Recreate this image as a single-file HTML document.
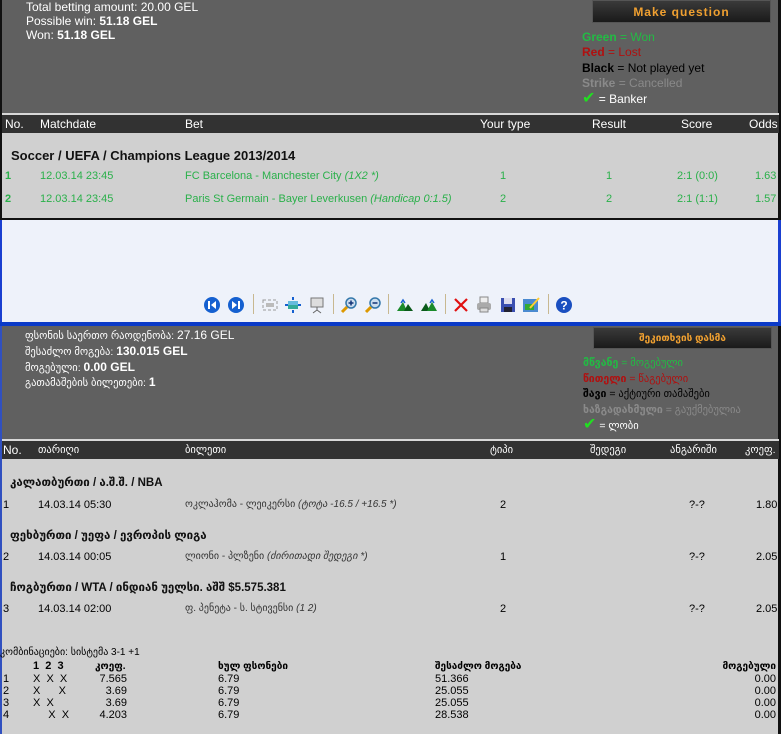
<!DOCTYPE html>
<html><head><meta charset="utf-8"><style>
*{margin:0;padding:0;box-sizing:border-box}
body{width:781px;height:734px;overflow:hidden;background:#eef2fa;font-family:"Liberation Sans","DejaVu Sans",sans-serif;font-size:12px;position:relative}
.a{position:absolute;white-space:nowrap}
.g{font-family:"Liberation Sans","DejaVu Sans",sans-serif;font-size:10.5px}
.w{color:#fff}.b{font-weight:bold}
.gr{color:#22bb44}.rd{color:#b01010}.bk{color:#000}.st{color:#8a8a8a}
.gt{color:#2ab04a}
.btn{position:absolute;background:linear-gradient(#3a3a3a,#1a1a1a);color:#f0a030;font-weight:bold;text-align:center;border:1px solid #555}
.hdr{position:absolute;left:2px;right:2px;background:#323232;border-top:2px solid #d8d8d8;color:#fff}
.ico{position:absolute;top:296px;width:18px;height:18px}
.sep{position:absolute;top:294px;width:1px;height:20px;background:#c8b890}
.r{text-align:right}
</style></head><body>
<!-- top panel -->
<div class="a" style="left:0;top:0;width:781px;height:220px;background:#606060;border-left:2px solid #111;border-right:3px solid #111;border-bottom:2px solid #111"></div>
<div class="a w" style="left:26px;top:0px">Total betting amount: 20.00 GEL</div>
<div class="a w" style="left:26px;top:14px">Possible win: <b>51.18 GEL</b></div>
<div class="a w" style="left:26px;top:28px">Won: <b>51.18 GEL</b></div>
<div class="btn" style="left:592px;top:0;width:179px;height:23px;line-height:22px;font-size:12px;letter-spacing:1px">Make question</div>
<div class="a" style="left:582px;top:30px"><b class="gr">Green</b> <span class="gr">= Won</span></div>
<div class="a" style="left:582px;top:45px"><b class="rd">Red</b> <span class="rd">= Lost</span></div>
<div class="a bk" style="left:582px;top:61px"><b>Black</b> = Not played yet</div>
<div class="a st" style="left:582px;top:76px"><b>Strike</b> = Cancelled</div>
<div class="a w" style="left:582px;top:92px"><span style="color:#22dd22;font-weight:bold;font-size:16px;line-height:12px">✔</span> = Banker</div>
<div class="hdr" style="top:113px;height:20px"></div>
<div class="a w" style="left:5px;top:117px">No.</div>
<div class="a w" style="left:40px;top:117px">Matchdate</div>
<div class="a w" style="left:185px;top:117px">Bet</div>
<div class="a w" style="left:480px;top:117px">Your type</div>
<div class="a w" style="left:592px;top:117px">Result</div>
<div class="a w" style="left:681px;top:117px">Score</div>
<div class="a w" style="left:749px;top:117px">Odds</div>
<div class="a" style="left:2px;top:133px;width:776px;height:85px;background:#d0d0d0"></div>
<div class="a b" style="left:11px;top:148px;font-size:13px;color:#111">Soccer / UEFA / Champions League 2013/2014</div>
<div class="a gt" style="left:5px;top:170px;font-size:11px"><b>1</b></div>
<div class="a gt" style="left:40px;top:170px;font-size:11px">12.03.14 23:45</div>
<div class="a gt" style="left:185px;top:170px;font-size:11px">FC Barcelona - Manchester City <i>(1X2 *)</i></div>
<div class="a gt" style="left:500px;top:170px;font-size:11px">1</div>
<div class="a gt" style="left:606px;top:170px;font-size:11px">1</div>
<div class="a gt" style="left:677px;top:170px;font-size:11px">2:1 (0:0)</div>
<div class="a gt" style="left:755px;top:170px;font-size:11px">1.63</div>
<div class="a gt" style="left:5px;top:193px;font-size:11px"><b>2</b></div>
<div class="a gt" style="left:40px;top:193px;font-size:11px">12.03.14 23:45</div>
<div class="a gt" style="left:185px;top:193px;font-size:11px">Paris St Germain - Bayer Leverkusen <i>(Handicap 0:1.5)</i></div>
<div class="a gt" style="left:500px;top:193px;font-size:11px">2</div>
<div class="a gt" style="left:606px;top:193px;font-size:11px">2</div>
<div class="a gt" style="left:677px;top:193px;font-size:11px">2:1 (1:1)</div>
<div class="a gt" style="left:755px;top:193px;font-size:11px">1.57</div>
<!-- white area border -->
<div class="a" style="left:0;top:220px;width:2px;height:106px;background:#1a3fd0"></div>
<div class="a" style="left:778px;top:220px;width:3px;height:106px;background:#1a3fd0"></div>
<!-- toolbar -->
<svg class="ico" style="left:203px" viewBox="0 0 18 18"><circle cx="9" cy="9" r="8" fill="#1560d0"/><rect x="5" y="5" width="2" height="8" fill="#fff"/><path d="M13 5L8 9l5 4z" fill="#fff"/></svg>
<svg class="ico" style="left:227px" viewBox="0 0 18 18"><circle cx="9" cy="9" r="8" fill="#1560d0"/><rect x="11" y="5" width="2" height="8" fill="#fff"/><path d="M5 5l5 4-5 4z" fill="#fff"/></svg>
<div class="sep" style="left:253px"></div>
<svg class="ico" style="left:261px" viewBox="0 0 18 18"><rect x="2" y="4" width="14" height="10" fill="none" stroke="#999" stroke-dasharray="3 2"/><rect x="5" y="7" width="8" height="4" fill="#bbb"/></svg>
<svg class="ico" style="left:284px" viewBox="0 0 18 18"><rect x="4" y="5" width="10" height="8" fill="#3a9"/><rect x="4" y="5" width="10" height="4" fill="#6bd"/><path d="M1 9h3M14 9h3M9 1v3M9 14v3" stroke="#1560d0" stroke-width="2"/></svg>
<svg class="ico" style="left:308px" viewBox="0 0 18 18"><rect x="3" y="2" width="12" height="9" fill="#ddd" stroke="#777"/><path d="M9 11v3M5 17l4-3 4 3" stroke="#666" fill="none"/></svg>
<div class="sep" style="left:333px"></div>
<svg class="ico" style="left:340px" viewBox="0 0 18 18"><circle cx="11" cy="7" r="5" fill="#cde" stroke="#37a" stroke-width="1.5"/><path d="M8.5 7h5M11 4.5v5" stroke="#137" stroke-width="1.5"/><path d="M7 11l-5 5" stroke="#d90" stroke-width="3"/></svg>
<svg class="ico" style="left:364px" viewBox="0 0 18 18"><circle cx="11" cy="7" r="5" fill="#cde" stroke="#37a" stroke-width="1.5"/><path d="M8.5 7h5" stroke="#137" stroke-width="1.5"/><path d="M7 11l-5 5" stroke="#d90" stroke-width="3"/></svg>
<div class="sep" style="left:388px"></div>
<svg class="ico" style="left:396px" viewBox="0 0 18 18"><path d="M1 15l6-9 4 9z" fill="#1a8a2a"/><path d="M8 15l4-7 5 7z" fill="#0a5a1a"/><path d="M5 7l2-3 2 3" stroke="#1560d0" fill="none" stroke-width="1.5"/></svg>
<svg class="ico" style="left:420px" viewBox="0 0 18 18"><path d="M1 15l5-8 4 8z" fill="#0a5a1a"/><path d="M7 15l5-9 5 9z" fill="#1a8a2a"/><path d="M10 7l2-3 2 3" stroke="#1560d0" fill="none" stroke-width="1.5"/></svg>
<div class="sep" style="left:445px"></div>
<svg class="ico" style="left:452px" viewBox="0 0 18 18"><path d="M3 3l12 12M15 3L3 15" stroke="#e01010" stroke-width="2.2"/></svg>
<svg class="ico" style="left:475px" viewBox="0 0 18 18"><rect x="5" y="1" width="8" height="6" fill="#eee" stroke="#888"/><rect x="2" y="7" width="14" height="7" rx="2" fill="#aaa"/><rect x="5" y="12" width="8" height="4" fill="#ddd" stroke="#888"/></svg>
<svg class="ico" style="left:499px" viewBox="0 0 18 18"><rect x="2" y="2" width="14" height="14" fill="#3a4fb0"/><rect x="5" y="2" width="8" height="6" fill="#dde"/><rect x="5" y="11" width="8" height="5" fill="#223"/></svg>
<svg class="ico" style="left:522px" viewBox="0 0 18 18"><rect x="1" y="3" width="15" height="13" fill="#4a8ad0"/><rect x="3" y="8" width="9" height="6" fill="#3a3"/><path d="M8 12L17 2" stroke="#fc3" stroke-width="2"/></svg>
<div class="sep" style="left:548px"></div>
<svg class="ico" style="left:555px" viewBox="0 0 18 18"><circle cx="9" cy="9" r="8" fill="#1a4fc0"/><text x="9" y="13.5" font-size="12" font-weight="bold" fill="#fff" text-anchor="middle" font-family="Liberation Sans">?</text></svg>
<div class="a" style="left:0;top:322px;width:781px;height:4px;background:#0a3ac8"></div>
<!-- second panel -->
<div class="a" style="left:0;top:326px;width:781px;height:408px;background:#606060;border-left:2px solid #3050c0;border-right:3px solid #111"></div>
<div class="a w g" style="left:25px;top:328px">ფსონის საერთო რაოდენობა: <span style="font-family:'Liberation Sans';font-size:12px">27.16 GEL</span></div>
<div class="a w g" style="left:25px;top:344px">შესაძლო მოგება: <b style="font-family:'Liberation Sans';font-size:12px">130.015 GEL</b></div>
<div class="a w g" style="left:25px;top:360px">მოგებული: <b style="font-family:'Liberation Sans';font-size:12px">0.00 GEL</b></div>
<div class="a w g" style="left:25px;top:375px">გათამაშების ბილეთები: <b style="font-family:'Liberation Sans';font-size:12px">1</b></div>
<div class="btn g" style="left:593px;top:327px;width:179px;height:22px;line-height:21px;font-size:10px">შეკითხვის დასმა</div>
<div class="a g" style="left:583px;top:357px"><b class="gr">მწვანე</b> <span class="gr">= მოგებული</span></div>
<div class="a g" style="left:583px;top:373px"><b class="rd">წითელი</b> <span class="rd">= წაგებული</span></div>
<div class="a g bk" style="left:583px;top:388px"><b>შავი</b> = აქტიური თამაშები</div>
<div class="a g st" style="left:583px;top:404px"><b>ხაზგადახმული</b> = გაუქმებულია</div>
<div class="a g w" style="left:583px;top:419px"><span style="color:#22dd22;font-weight:bold;font-size:16px;line-height:12px">✔</span> = ლობი</div>
<div class="hdr" style="top:439px;height:20px"></div>
<div class="a w" style="left:3px;top:443px">No.</div>
<div class="a w g" style="left:38px;top:444px">თარიღი</div>
<div class="a w g" style="left:185px;top:444px">ბილეთი</div>
<div class="a w g" style="left:490px;top:444px">ტიპი</div>
<div class="a w g" style="left:590px;top:444px">შედეგი</div>
<div class="a w g" style="left:670px;top:444px">ანგარიში</div>
<div class="a w g" style="left:745px;top:444px">კოეფ.</div>
<div class="a" style="left:2px;top:459px;width:776px;height:275px;background:#d0d0d0"></div>
<div class="a b g" style="left:10px;top:475px;font-size:11.5px;color:#111">კალათბურთი / ა.შ.შ. / NBA</div>
<div class="a" style="left:3px;top:499px;font-size:11px">1</div>
<div class="a" style="left:38px;top:499px;font-size:11px">14.03.14 05:30</div>
<div class="a g" style="left:185px;top:499px;font-size:10px;color:#333">ოკლაჰომა - ლეიკერსი <i>(ტოტა -16.5 / +16.5 *)</i></div>
<div class="a" style="left:500px;top:499px;font-size:11px">2</div>
<div class="a" style="left:689px;top:499px;font-size:11px">?-?</div>
<div class="a" style="left:756px;top:499px;font-size:11px">1.80</div>
<div class="a b g" style="left:10px;top:528px;font-size:11.5px;color:#111">ფეხბურთი / უეფა / ევროპის ლიგა</div>
<div class="a" style="left:3px;top:551px;font-size:11px">2</div>
<div class="a" style="left:38px;top:551px;font-size:11px">14.03.14 00:05</div>
<div class="a g" style="left:185px;top:551px;font-size:10px;color:#333">ლიონი - პლზენი <i>(ძირითადი შედეგი *)</i></div>
<div class="a" style="left:500px;top:551px;font-size:11px">1</div>
<div class="a" style="left:689px;top:551px;font-size:11px">?-?</div>
<div class="a" style="left:756px;top:551px;font-size:11px">2.05</div>
<div class="a b g" style="left:10px;top:580px;font-size:11.5px;color:#111">ჩოგბურთი / WTA / ინდიან უელსი. აშშ $5.575.381</div>
<div class="a" style="left:3px;top:603px;font-size:11px">3</div>
<div class="a" style="left:38px;top:603px;font-size:11px">14.03.14 02:00</div>
<div class="a g" style="left:185px;top:603px;font-size:10px;color:#333">ფ. პენეტა - ს. სტივენსი <i>(1 2)</i></div>
<div class="a" style="left:500px;top:603px;font-size:11px">2</div>
<div class="a" style="left:689px;top:603px;font-size:11px">?-?</div>
<div class="a" style="left:756px;top:603px;font-size:11px">2.05</div>
<div class="a g" style="left:0;top:647px;font-size:10px">კომბინაციები: სისტემა 3-1 +1</div>
<div class="a b" style="left:33px;top:660px;font-size:11px">1&nbsp; 2&nbsp; 3</div>
<div class="a b g" style="left:95px;top:661px;font-size:10px">კოეფ.</div>
<div class="a b g" style="left:218px;top:661px;font-size:10px">ხულ ფსონები</div>
<div class="a b g" style="left:435px;top:661px;font-size:10px">შესაძლო მოგება</div>
<div class="a b g" style="left:700px;top:661px;width:76px;text-align:right;font-size:10px">მოგებული</div>
<div class="a" style="left:3px;top:673px;font-size:11px;line-height:12px">1<br>2<br>3<br>4</div>
<div class="a" style="left:33px;top:673px;font-size:11px;line-height:12px">X&nbsp; X&nbsp; X<br>X&nbsp; &nbsp; &nbsp; X<br>X&nbsp; X<br>&nbsp; &nbsp; &nbsp;X&nbsp; X</div>
<div class="a r" style="left:80px;top:673px;width:47px;font-size:11px;line-height:12px">7.565<br>3.69<br>3.69<br>4.203</div>
<div class="a" style="left:218px;top:673px;font-size:11px;line-height:12px">6.79<br>6.79<br>6.79<br>6.79</div>
<div class="a" style="left:435px;top:673px;font-size:11px;line-height:12px">51.366<br>25.055<br>25.055<br>28.538</div>
<div class="a r" style="left:700px;top:673px;width:76px;font-size:11px;line-height:12px">0.00<br>0.00<br>0.00<br>0.00</div>
</body></html>
